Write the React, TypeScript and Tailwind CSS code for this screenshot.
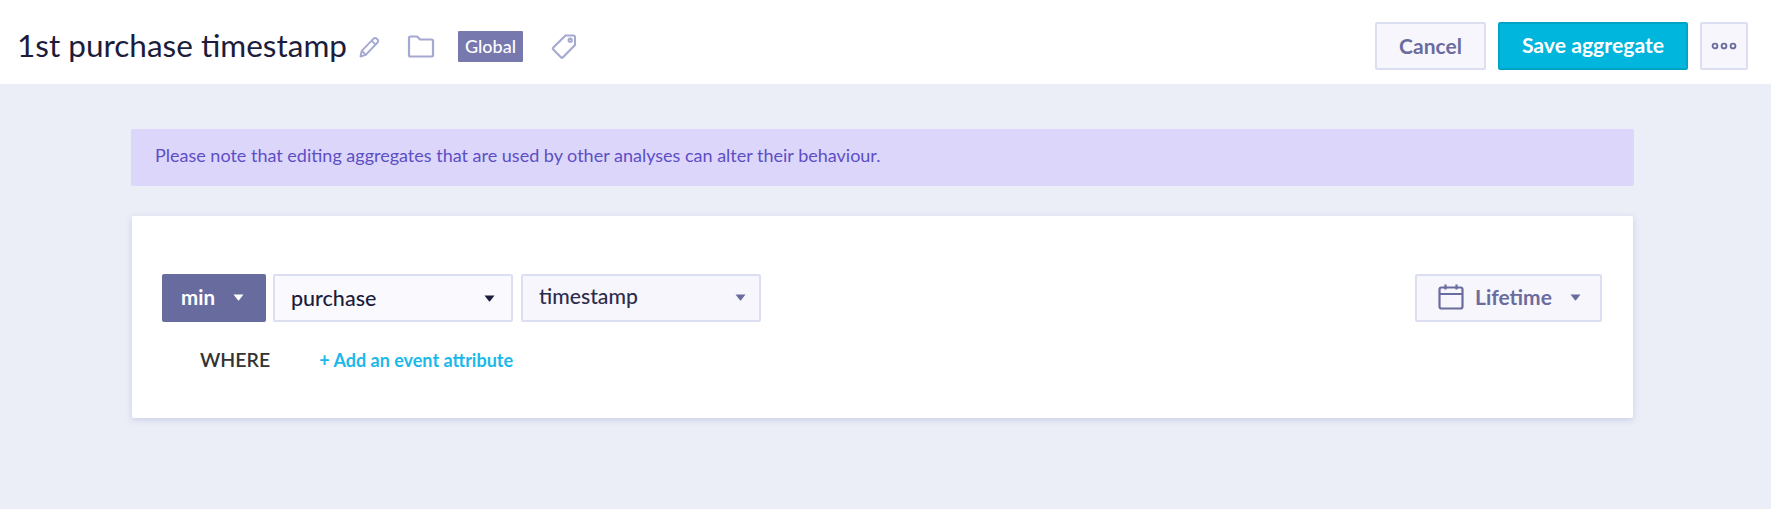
import React from 'react';

const Caret = ({ className }: { className: string }) => (
  <svg width="11" height="7" viewBox="0 0 11 7" className={className}>
    <path d="M0.5 0.5h10L6 6.2a.7.7 0 0 1-1 0z" fill="currentColor" />
  </svg>
);

const App: React.FC = () => {
  return (
    <div className="h-[509px] w-full bg-[#ebedf7] font-['Lato','Open_Sans',sans-serif] overflow-hidden">
      {/* Header */}
      <div className="h-[84px] bg-white flex items-center pt-[8px] pl-[17px] pr-[23px]">
        <h1 className="text-[31.5px] leading-none text-[#1c1c3c] font-normal">1st purchase timestamp</h1>
        <svg width="24" height="24" viewBox="0 0 24 24" fill="none" stroke="#a5a8d0" strokeWidth="1.9" strokeLinejoin="round" className="ml-[10px] mt-[2px]">
          <path d="M3.5 21.5l1.2-5.6L16.6 3.6a2.1 2.1 0 0 1 3 0l.9.9a2.1 2.1 0 0 1 0 3L8.8 19.9z" />
          <path d="M14.6 5.7l3.9 3.9M4.9 16l3.7 3.7" />
        </svg>
        <svg width="28" height="25" viewBox="0 0 28 25" fill="none" stroke="#a5a8d0" strokeWidth="2.2" strokeLinejoin="round" className="ml-[26px]">
          <path d="M2 4a1.5 1.5 0 0 1 1.5-1.5h6.6l3 3h11.4A1.5 1.5 0 0 1 26 7v14a1.5 1.5 0 0 1-1.5 1.5h-21A1.5 1.5 0 0 1 2 21z" />
        </svg>
        <span className="ml-[23px] h-[31px] w-[65px] bg-[#7678ae] rounded-[1px] text-white text-[18px] font-medium flex items-center justify-center">Global</span>
        <svg width="28" height="28" viewBox="0 0 28 28" fill="none" stroke="#a5a8d0" strokeWidth="2.1" strokeLinejoin="round" className="ml-[27px]">
          <path d="M15.5 3.5h8a1.5 1.5 0 0 1 1.5 1.5v8L13 25.2a1.5 1.5 0 0 1-2.1 0l-7.6-7.6a1.5 1.5 0 0 1 0-2.1z" />
          <circle cx="20.2" cy="8.2" r="1.6" />
        </svg>
        <div className="ml-auto flex items-center">
          <button className="h-[48px] w-[111px] border-2 border-[#dcdff1] bg-[#f7f6fd] rounded-[2px] text-[#6a6c9e] text-[21px] font-bold">Cancel</button>
          <button className="ml-[12px] h-[48px] w-[190px] border-2 border-[#00a5c6] bg-[#00b6dc] rounded-[2px] text-white text-[21.2px] font-bold">Save aggregate</button>
          <button className="ml-[12px] h-[48px] w-[48px] border-2 border-[#dcdff1] bg-[#f7f6fd] rounded-[2px] flex items-center justify-center">
            <svg width="26" height="10" viewBox="0 0 26 10" fill="none" stroke="#6a6c9e" strokeWidth="1.9">
              <circle cx="4" cy="5" r="2.4" />
              <circle cx="13" cy="5" r="2.4" />
              <circle cx="22" cy="5" r="2.4" />
            </svg>
          </button>
        </div>
      </div>

      {/* Content */}
      <div className="pt-[45px] pl-[131px] pr-[137px]">
        <div className="h-[57px] bg-[#ddd6fb] rounded-[2px] pl-[24px] pb-[4px] flex items-center text-[18px] text-[#5c4fc4]">
          Please note that editing aggregates that are used by other analyses can alter their behaviour.
        </div>
        <div className="mt-[30px] h-[202px] ml-px mr-px bg-white rounded-[2px] shadow-[0_2px_6px_rgba(120,125,180,0.25)] pt-[58px] pl-[30px] pr-[31px]">
          <div className="flex items-start">
            <button className="h-[48px] w-[104px] bg-[#686b9e] rounded-[2px] text-white text-[20.5px] font-bold flex items-center pl-[19px] pb-[2px]">
              min
              <Caret className="ml-[18px] text-white" />
            </button>
            <button className="ml-[7px] h-[48px] w-[240px] border-2 border-[#dcdff1] bg-[#f9f9fe] rounded-[2px] text-[#1c1c3c] text-[21.5px] font-medium flex items-center justify-between pl-[16px] pr-[16px]">
              purchase
              <Caret className="text-[#1c1c3c]" />
            </button>
            <button className="ml-[8px] h-[48px] w-[240px] border-2 border-[#dcdff1] bg-[#f7f6fd] rounded-[2px] text-[#2c2c4c] text-[21.2px] font-medium flex items-center justify-between pl-[16px] pr-[13px] pb-[2px]">
              timestamp
              <Caret className="text-[#6a6c9e]" />
            </button>
            <button className="ml-auto h-[48px] w-[187px] border-2 border-[#dcdff1] bg-[#f7f6fd] rounded-[2px] text-[#6a6c9e] text-[21px] font-bold flex items-center pl-[21px] pb-[2px]">
              <svg width="26" height="26" viewBox="0 0 26 26" fill="none" stroke="#6a6c9e" strokeWidth="2.2" strokeLinejoin="round">
                <rect x="1.5" y="3.5" width="23" height="21" rx="2" />
                <path d="M1.5 10h23M7.5 0.5v5M18.5 0.5v5" />
              </svg>
              <span className="ml-[11px]">Lifetime</span>
              <Caret className="ml-[18px] text-[#6a6c9e]" />
            </button>
          </div>
          <div className="mt-[26px] flex items-center leading-[24px]">
            <span className="ml-[38px] text-[#333333] font-semibold text-[19.5px]">WHERE</span>
            <span className="ml-[49px] text-[#1bb8ea] font-bold text-[18px]">+ Add an event attribute</span>
          </div>
        </div>
      </div>
    </div>
  );
};

export default App;
